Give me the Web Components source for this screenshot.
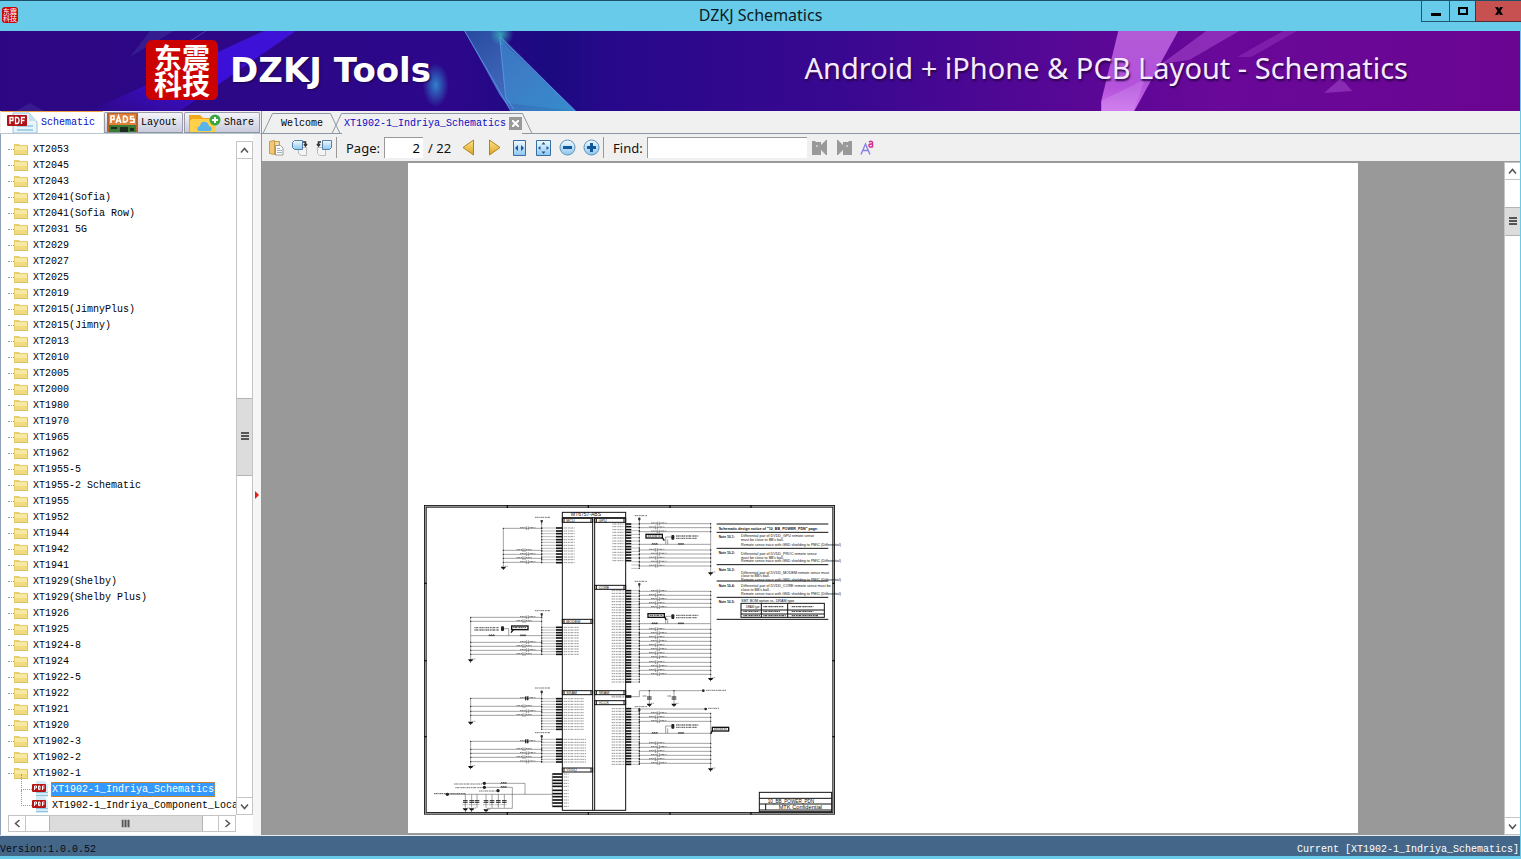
<!DOCTYPE html>
<html lang="en">
<head>
<meta charset="utf-8">
<title>DZKJ Schematics</title>
<style>
html,body{margin:0;height:100%;background:#69cbea}
body{overflow:hidden}
</style>
</head>
<body>
<app-window></app-window>

<script>
const define = (name, html, setup) => {
  const tpl = document.createElement('template');
  tpl.innerHTML = `<style>:host,*{box-sizing:border-box}:host([hidden]){display:none}</style>` + html;
  customElements.define(name, class extends HTMLElement {
    connectedCallback() {
      if (this.shadowRoot) return;
      const root = this.attachShadow({ mode: 'open' });
      root.append(tpl.content.cloneNode(true));
      if (setup) setup(this, root);
    }
  });
};

/* ---------- brand seal ---------- */
define('brand-seal', `
<style>
:host{display:grid;place-content:center;flex:none;
 background:#cc0202;color:#fff;font-family:"Noto Sans CJK SC",sans-serif;font-weight:700;
 width:72px;height:60px;border-radius:6px;font-size:28px;line-height:26px}
span{width:2em;white-space:normal;word-break:break-all}
:host([small]){width:16px;height:16px;border-radius:3px;font-size:7px;line-height:7px;font-weight:400}
</style>
<span>东震科技</span>`);

/* ---------- title bar ---------- */
define('title-bar', `
<style>
:host{display:grid;grid-template-columns:1fr auto 1fr;height:31px;background:#69cbea;border-top:1px solid #1c4f68;color:#0b1c24;
 font:16px/29px "Noto Sans","Open Sans",sans-serif}
brand-seal{margin:6px 2px}
h1{margin:0;font:inherit}
.btns{display:flex;justify-content:flex-end}
button{width:28px;height:21px;padding:0;border:1px solid #20566c;border-top:0;border-right:0;background:#69cbea;display:grid;place-items:center}
button.max{width:26px}
button.close{width:46px;background:#c75050;border-color:#5c2a33}
</style>
<brand-seal small></brand-seal><h1>DZKJ Schematics</h1>
<div class="btns">
<button aria-label="Minimize"><svg width="12" height="12"><path d="M1 8h10v3H1z"/></svg></button>
<button class="max" aria-label="Maximize"><svg width="12" height="12"><path fill-rule="evenodd" d="M1 2h10v8H1zM3 4v4h6V4z"/></svg></button>
<button class="close" aria-label="Close"><svg width="10" height="10"><path d="M1 1h3l1 2 1-2h3L6.500 5 9 9H6L5 7 4 9H1l2.500-4z"/></svg></button>
</div>`);

/* ---------- banner ---------- */
define('brand-banner', `
<style>
:host{display:flex;position:relative;height:80px;align-items:center;padding:0 112px 2px 146px;background:#330890;color:#fff;
 font-family:"Noto Sans","Open Sans",sans-serif;white-space:nowrap;overflow:hidden}
svg{position:absolute;inset:0;width:100%;height:100%}
brand-seal,strong,span{position:relative}
strong{margin-left:12px;font-family:"DejaVu Sans",sans-serif;font-size:34px;line-height:40px;font-weight:700;text-shadow:1px 1px 2px #1a0550}
span{margin-left:auto;font-weight:400;font-size:29px;line-height:36px;padding-bottom:4px;color:#f6eaff;text-shadow:1px 2px 2px #2a0448}
</style>
<svg viewBox="0 0 1521 80" preserveAspectRatio="none" aria-hidden="true">
<defs>
<linearGradient id="bg"><stop offset="0" stop-color="#2d0783"/><stop offset=".3" stop-color="#2c078a"/><stop offset=".36" stop-color="#1b0a80"/><stop offset=".4" stop-color="#27088a"/><stop offset=".55" stop-color="#380890"/><stop offset=".72" stop-color="#5b0796"/><stop offset=".8" stop-color="#690899"/><stop offset="1" stop-color="#6a0592"/></linearGradient>
<linearGradient id="sh" x1="0" y1="0" x2="1" y2="1"><stop offset="0" stop-color="#274aa0"/><stop offset=".5" stop-color="#3f66b8"/><stop offset="1" stop-color="#2f86c4"/></linearGradient>
<linearGradient id="pk" x1="0" y1="0" x2="0" y2="1"><stop offset="0" stop-color="#b25bd6"/><stop offset=".7" stop-color="#b452dc"/><stop offset="1" stop-color="#cf72ee"/></linearGradient>
<linearGradient id="bm" x1="0" y1="1" x2="1" y2="0"><stop offset="0" stop-color="#4812e0" stop-opacity="0"/><stop offset=".5" stop-color="#3a0fd8"/><stop offset="1" stop-color="#3f12d6"/></linearGradient>
<radialGradient id="gl"><stop offset="0" stop-color="#2f82cc"/><stop offset="1" stop-color="#2f82cc" stop-opacity="0"/></radialGradient>
<radialGradient id="tl"><stop offset="0" stop-color="#38b8c0" stop-opacity=".8"/><stop offset="1" stop-color="#38b8c0" stop-opacity="0"/></radialGradient>
</defs>
<path fill="url(#bg)" d="M0 0h1521v80H0z"/>
<path fill="url(#bm)" d="M264 0h32L180 80H90z"/>
<path fill="#3a2a96" opacity=".6" d="M150 0h24l-44 26zM16 80l14-8 14 8z"/>
<path stroke="#5b4fd0" opacity=".7" fill="none" d="M206 0l-60 38"/>
<ellipse cx="436" cy="54" rx="13" ry="22" fill="url(#gl)"/>
<path fill="url(#sh)" d="M465 0h35l4 8 72 72h-64l-12-16z"/>
<path fill="#3d8fd2" opacity=".55" d="M500 8l6 64 70 8z"/>
<path fill="none" stroke="#5a8fe8" d="M465 0l36 62 10 18M500 6l76 74M500 6l6 60 8 12"/>
<circle cx="502" cy="3" r="12" fill="url(#tl)"/>
<path fill="url(#pk)" d="M1119 0h60l-44 80h-33v-10z"/>
<path fill="#d59af0" opacity=".3" d="M1102 70l44-22-12 32h-32z"/>
<path fill="#9b3cc4" opacity=".7" d="M1207 0h33l-50 29-28 4z"/>
<path fill="#8a2db6" opacity=".6" d="M1284 0h14l-46 26h-14z"/>
<path fill="#8a2bb4" d="M1342 47l11 13-28 2z"/>
</svg>
<brand-seal></brand-seal><strong>DZKJ Tools</strong><span>Android + iPhone &amp; PCB Layout - Schematics</span>`);

/* ---------- scroll bar ---------- */
define('scroll-bar', `
<style>
:host{display:flex;flex-direction:column;width:17px;flex:none;background:#fff;border:1px solid #c4c4c4;overflow:hidden}
:host([horizontal]){flex-direction:row;width:auto;height:17px}
button{flex:none;border:0;padding:0;background:#fff;height:16px;width:15px;display:grid;place-items:center;overflow:hidden}
:host([horizontal]) button{width:16px;height:15px}
svg{fill:none;stroke:#555;stroke-width:1.500}
.a{border:0 solid #c4c4c4;flex:var(--before) 1 0;border-top-width:1px}
.b{border:0 solid #c4c4c4;flex:var(--after) 1 0;border-bottom-width:1px}
:host([horizontal]) .a{border-width:0 0 0 1px}
:host([horizontal]) .b{border-width:0 1px 0 0}
.t{flex:none;height:var(--thumb);background:#dcdcdc;border:0 solid #b4b4b4;border-width:1px 0;display:grid;place-items:center}
:host([horizontal]) .t{height:auto;width:var(--thumb);border-width:0 1px}
.g{stroke-width:2}
:host([horizontal]) svg{transform:rotate(-90deg)}
</style>
<button aria-label="Scroll back" tabindex="-1"><svg width="9" height="9"><path d="M1 6.500l3.500-4 3.500 4"/></svg></button>
<div class="a"></div><div class="t"><svg class="g" width="8" height="9"><path d="M0 1h8M0 4h8M0 7h8"/></svg></div><div class="b"></div>
<button aria-label="Scroll on" tabindex="-1"><svg width="9" height="9"><path d="M1 2.500l3.500 4 3.500-4"/></svg></button>`);

/* ---------- side tabs ---------- */
define('side-tab', `
<style>
:host{display:block;align-self:end}
button{display:flex;align-items:center;gap:3px;height:21px;padding:0 5px 0 2px;border:1px solid #9a9aa8;border-bottom-color:#8b97a3;border-radius:2px 2px 0 0;
 background:linear-gradient(#f4f4fa,#c9cbdc);font:inherit;color:#000;overflow:hidden}
:host([active]) button{height:23px;border:0;border-top:2px solid #f0a040;background:#fff;color:#0a0ac0;padding:0 8px 0 6px}
</style>
<button role="tab"><slot name="icon"></slot><slot></slot></button>`);

/* ---------- tree ---------- */
define('tree-item', `
<style>
:host{display:flex;height:16px;align-items:center;white-space:nowrap;line-height:15px}
.d{flex:none;width:6px;border-top:1px dotted #999}
svg{flex:none}
.l{padding:0 1px;margin-left:4px}
.pdf{display:none}
:host([file]) .pdf{display:block}
:host([file]) .fold{display:none}
:host([file]) .d{position:relative;width:11px;margin-left:13px}
:host([file]) .d::before{content:"";position:absolute;left:0;bottom:0;height:16px;border-left:1px dotted #999}
:host([file]) .l{margin-left:3px}
:host([selected]) .l{background:#3399ff;color:#fff;outline:1px dotted #d08a30;outline-offset:-1px}
</style>
<span class="d"></span>
<svg class="fold" width="14" height="12" viewBox="0 0 14 12"><path fill="#e5cf6c" d="M0 1h5l1 1h8v10H0z"/><path fill="#f8e9a0" d="M1 3h12v8H1z"/><path fill="#f0db80" d="M1 7h12v4H1z"/><path fill="none" stroke="#d8c25e" d="M.5 11.500h13v-9"/></svg>
<svg class="pdf" width="16" height="16" viewBox="0 0 16 16"><path fill="#d4ebf6" d="M4 0h9l3 4v12H4z"/><path fill="#8fc4df" d="M4 11h12v1H4zM4 14h12v1H4z"/><rect y="3" width="14" height="8" rx="1" fill="#b81414"/><path fill="none" stroke="#fff" d="M2.500 9V5h2v2h-2M6.500 5v3.500h1.500V5zM10.500 9V5h2M10.500 7h2"/></svg>
<span class="l"><slot></slot></span>`);

define('tree-view', `
<style>:host{display:block;overflow:hidden;min-height:0;min-width:0}</style>
<div role="tree" aria-label="Schematics"></div>`, (host, root) => {
  const list = root.querySelector('div');
  const folders = ['XT2053','XT2045','XT2043','XT2041(Sofia)','XT2041(Sofia Row)','XT2031 5G','XT2029','XT2027','XT2025','XT2019','XT2015(JimnyPlus)','XT2015(Jimny)','XT2013','XT2010','XT2005','XT2000','XT1980','XT1970','XT1965','XT1962','XT1955-5','XT1955-2 Schematic','XT1955','XT1952','XT1944','XT1942','XT1941','XT1929(Shelby)','XT1929(Shelby Plus)','XT1926','XT1925','XT1924-8','XT1924','XT1922-5','XT1922','XT1921','XT1920','XT1902-3','XT1902-2','XT1902-1'];
  const add = (text, ...flags) => {
    const item = document.createElement('tree-item');
    item.setAttribute('role', 'treeitem');
    item.textContent = text;
    flags.forEach(f => item.setAttribute(f, ''));
    list.append(item);
  };
  folders.forEach(f => add(f));
  add('XT1902-1_Indriya_Schematics', 'file', 'selected');
  add('XT1902-1_Indriya_Component_Loca', 'file');
  add('');
});

define('side-panel', `
<style>
:host{display:flex;flex-direction:column;width:261px;flex:none;min-height:0;background:#f0f0f0}
nav{display:flex;height:23px;gap:1px;padding-left:1px;border-bottom:1px solid #b9c4ce}
.body{flex:1;min-height:0;display:grid;grid-template-columns:1fr 17px 8px;grid-template-rows:1fr 17px;padding:7px 0 3px 7px;background:#fff;border-left:1px solid #8fa0b4}
tree-view{grid-area:1/1}
.v{grid-area:1/2;--before:239;--thumb:78px;--after:322}
.h{grid-area:2/1;--before:25;--thumb:154px;--after:16}
.split{grid-area:1/3/3/4;display:grid;place-items:center;background:#f6f6f8;margin:-7px 0 -3px}
.split svg{margin-top:20px}
</style>
<nav role="tablist">
<side-tab active><svg slot="icon" width="31" height="21" viewBox="0 0 31 21"><path fill="#e8f4fb" stroke="#9ac0d8" d="M6 21V1h16l8 9v11z"/><path fill="#c3e0ef" d="M22 1v8h8z"/><path fill="#a6d0e8" d="M10 13h16v2H10zM10 17h16v2H10z"/><rect y="3" width="20" height="11" rx="1" fill="#b01218"/><path fill="none" stroke="#fff" stroke-width="1.300" d="M3 12V5.500h3v3H3M8.500 5.500v6h1.500q2 0 2-3t-2-3zM14.500 12V5.500H18M14.500 8.500h3"/></svg>Schematic</side-tab>
<side-tab><svg slot="icon" width="31" height="19" viewBox="0 0 31 19"><path fill="#b8622a" d="M0 0h31v19H0z"/><path fill="#e0803a" d="M2 1h27v11H2z"/><path fill="#3a7a34" d="M2 12h27v7H2z"/><path fill="#1c2c1c" d="M13 14h8v5h-8zM4 14h6v2H4zM23 15h4v3h-4z"/><path fill="none" stroke="#fff" stroke-width="1.600" d="M4 10V3h3v3.500H4M9 10l2.500-7 2.500 7M10 8h3M16.500 3v6.200q4 0 4-3t-4-3.200M27 3.500h-3.500v2.500H27v3.200h-4"/></svg>Layout</side-tab>
<side-tab><svg slot="icon" width="34" height="19" viewBox="-2 0 34 19"><path fill="#f0a818" d="M0 2h11l3 3h13v14H0z"/><path fill="#ffd04a" d="M1 8q2-3 6-2h20v13H1z"/><path fill="#58b4ec" d="M9 18q-2-4 2-5 1-5 5-4 3 0 4 4 4 1 2 5z"/><circle cx="26" cy="7" r="5.500" fill="#3aa840"/><path stroke="#fff" stroke-width="2" d="M26 4v6M23 7h6"/></svg>Share</side-tab>
</nav>
<div class="body"><tree-view></tree-view><scroll-bar class="v"></scroll-bar><scroll-bar class="h" horizontal></scroll-bar>
<div class="split"><svg width="6" height="8"><path fill="#e02010" d="M1 0l4 4-4 4z"/></svg></div></div>`);

/* ---------- document tabs ---------- */
define('doc-tab', `
<style>
:host{display:flex;height:21px;margin-left:-8px}
svg.e{flex:none;fill:#f0f0f0;stroke:#8b97a3;display:block}
.m{display:flex;align-items:center;border-top:1px solid #8b97a3;border-bottom:1px solid #8b97a3;background:#f0f0f0;gap:3px;padding:0 7px 0 8px}
button{border:0;background:none;padding:0;font:inherit;color:#000;line-height:18px}
:host([active]){position:relative}
:host([active]) .m{border-bottom-color:#f0f0f0;padding:0 0 0 2px}
:host([active]) button{color:#0a0ac0}
.x{display:none}
:host([active]) button.x{display:grid;place-items:center;width:13px;height:13px;background:#999}
</style>
<svg class="e" width="10" height="21"><path d="M0 20.500L9.500.5H10"/></svg>
<div class="m"><button role="tab"><slot></slot></button><button class="x" aria-label="Close tab"><svg width="7" height="7"><path stroke="#fff" stroke-width="2" d="M0 0l7 7M7 0L0 7"/></svg></button></div>
<svg class="e" width="10" height="21"><path d="M0 .5h.5L10 20.500"/></svg>`);

define('doc-tabs', `
<style>
:host{display:flex;align-items:flex-end;height:23px;padding-left:9px;
 background:linear-gradient(#8b97a3,#8b97a3) bottom/100% 1px no-repeat #f0f0f0}
</style>
<doc-tab>Welcome</doc-tab><doc-tab active>XT1902-1_Indriya_Schematics</doc-tab>`);

/* ---------- toolbar ---------- */
define('pdf-toolbar', `
<style>
:host{display:flex;align-items:center;height:28px;padding-left:6px;background:#f0f0f0;border-bottom:1px solid #999;color:#111;
 font:13px/20px "Noto Sans","Open Sans",sans-serif;white-space:nowrap}
button{border:0;background:none;padding:0;width:24px;height:24px;flex:none;display:grid;place-items:center}
button.s{width:16px}
button.w{width:32px}
button.nav{width:26px}
i{flex:none;width:1px;height:21px;background:#999}
.s + i{margin-left:4px}
label{margin:0 4px 0 9px}
input{height:21px;border:1px solid #999;border-right:0;border-bottom:0;background:#fff;font:inherit;padding:0 3px;outline:0}
.pg{width:39px;text-align:right}
.fd{width:160px;margin-right:1px}
.n{margin:0 4px 0 5px}
.defs{position:absolute}
</style>
<svg class="defs" width="0" height="0"><defs><linearGradient id="g" x2="0" y2="1"><stop stop-color="#ffe48a"/><stop offset="1" stop-color="#dca520"/></linearGradient><linearGradient id="b" x2="0" y2="1"><stop stop-color="#f2faff"/><stop offset="1" stop-color="#8cc6f0"/></linearGradient></defs></svg>
<button class="s" aria-label="Copy"><svg width="15" height="16" viewBox="0 0 15 16"><path fill="#f2c878" stroke="#c89a4c" d="M.5 1.500l5-1v14l-5-1z"/><path fill="#f5d898" stroke="#c89a4c" d="M5.500 1.500h5v13h-5z"/><path fill="#fff" stroke="#999" d="M6.500 5.500h5l2.500 2.500v7H6.500z"/><path stroke="#9ab4cc" d="M8 8.500h3M8 10.500h5M8 12.500h5"/></svg></button>
<button class="w" aria-label="Rotate right"><svg width="16" height="16" viewBox="0 0 16 16"><path fill="#f4f4f4" stroke="#bbb" d="M6.500 7.500h8v8h-5l-3-2z"/><path fill="url(#b)" stroke="#5580aa" d="M2.500.5h8v9h-8l-2-2v-5z"/><path fill="none" stroke="#333" stroke-width="1.500" d="M11 2h2.500v3M12 4l1.500 2L15 4"/></svg></button>
<button class="s" aria-label="Rotate left"><svg width="16" height="16" viewBox="0 0 16 16"><path fill="#f4f4f4" stroke="#bbb" d="M1.500 7.500h8v8h-6l-2-2z"/><path fill="url(#b)" stroke="#5580aa" d="M6.500.5h9v7l-2 2h-7z"/><path fill="none" stroke="#333" stroke-width="1.500" d="M5 2H2.500v3M1 4l1.500 2L4 4"/></svg></button>
<i></i>
<label for="p">Page:</label><input id="p" class="pg" value="2"><span class="n">/ 22</span>
<button class="nav" aria-label="Previous page"><svg width="13" height="17"><path fill="url(#g)" stroke="#b08420" d="M11.500 1v15L1 8.500z"/></svg></button>
<button class="nav" aria-label="Next page"><svg width="13" height="17"><path fill="url(#g)" stroke="#b08420" d="M1.500 1v15L12 8.500z"/></svg></button>
<button aria-label="Fit width"><svg width="13" height="16"><path fill="url(#b)" stroke="#3a6ca8" d="M.5.5h12v15H.5z"/><path fill="#1b56a0" d="M2 8l3-3v6zM11 8L8 5v6z"/></svg></button>
<button aria-label="Fit page"><svg width="15" height="16"><path fill="url(#b)" stroke="#3a6ca8" d="M.5.5h14v15H.5z"/><path fill="#1b56a0" d="M7.500 2l2 2.500h-4zM7.500 14l2-2.500h-4zM2 8l2.500-2v4zM13 8l-2.500-2v4z"/></svg></button>
<button aria-label="Zoom out"><svg width="17" height="17"><circle cx="8.500" cy="8.500" r="7.500" fill="url(#b)" stroke="#5a92b8"/><path fill="#14589c" d="M4 7h9v3H4z"/></svg></button>
<button aria-label="Zoom in"><svg width="17" height="17"><circle cx="8.500" cy="8.500" r="7.500" fill="url(#b)" stroke="#5a92b8"/><path fill="#14589c" d="M4 7h3V4h3v3h3v3h-3v3H7v-3H4z"/></svg></button>
<i></i>
<label for="f">Find:</label><input id="f" class="fd">
<button aria-label="Find previous"><svg width="16" height="15"><path fill="#999" d="M0 1h3l1 1h5v3l5-5h1v15h-1l-5-5v5H0z"/><path fill="#c8c8c8" d="M4 5h2v2H4z"/></svg></button>
<button aria-label="Find next"><svg width="16" height="15"><path fill="#999" d="M1 0h1l5 5V2h5l1-1h3v14H7v-5l-5 5H1z"/><path fill="#c8c8c8" d="M10 5h2v2h-2z"/></svg></button>
<button aria-label="Match case"><svg width="15" height="15"><path fill="none" stroke="#8a80e8" stroke-width="1.400" d="M1 14.500L5.500 4 10 14.500M3 10.500h5"/><path fill="none" stroke="#d02c90" stroke-width="1.500" d="M9 2q3-1.500 3.500.5V7.500M12.500 4q-4-.5-3.500 2 1 2 3.500.5"/></svg></button>`);

/* ---------- schematic sheet: drawn on a grid of thirds of a pixel ---------- */
define('schematic-sheet', `
<style>
:host{display:block}
svg{display:block}
text{font-family:"Liberation Sans",sans-serif;fill:#111}
</style>
<svg width="425" height="316" viewBox="0 0 1275 948"></svg>`, (host, root) => {
  let o = '';
  const line = (x1, y1, x2, y2, w = 1.5, c = '#444') => o += `<path d="M${x1} ${y1}L${x2} ${y2}" stroke="${c}" stroke-width="${w}"/>`;
  const box = (x, y, w, h, s = 3, f = 'none') => o += `<rect x="${x}" y="${y}" width="${w}" height="${h}" fill="${f}" stroke="#111" stroke-width="${s}"/>`;
  const text = (x, y, t, size = 10, extra = '') => o += `<text x="${x}" y="${y}" font-size="${size}" ${extra}>${t}</text>`;
  const dash = (x1, y, x2, w = 3, c = '#777') => o += `<path d="M${x1} ${y}H${x2}" stroke="${c}" stroke-width="${w}" stroke-dasharray="4 1 6 2 3 1"/>`;
  const dot = (x, y, r = 2) => o += `<circle cx="${x}" cy="${y}" r="${r}" fill="#222"/>`;
  const gnd = (x, y) => { o += `<path d="M${x - 8} ${y - 3}h16l-4 6h-3v4h-2v-4h-3z" fill="#111"/>`; dash(x + 5, y - 4, x + 14, 2); };
  const each = (y1, y2, n, fn) => { for (let i = 0; i < n; i++) fn(Math.round(y1 + (y2 - y1) * i / (n - 1))); };
  const pins = (x1, x2, y1, y2, n, names) => each(y1, y2, n, y => { line(x1, y, x2, y, 5, '#111'); dash(names[0], y, names[1], 3, '#999'); });
  const fan = (x1, x2, dotX, y1, y2, n) => each(y1, y2, n, y => { line(x1, y, x2, y, 1.5, '#777'); dot(dotX, y); });
  const cap = (x, y) => { dash(x - 22, y - 2, x - 4, 3); line(x - 3, y - 6, x - 3, y + 5); line(x + 3, y - 6, x + 3, y + 5); dash(x + 6, y - 2, x + 24, 3); };
  const port = (x, y) => { o += `<path d="M${x - 3} ${y}h6v5l-3 4-3-4z" fill="#111"/>`; line(x, y, x, y + 14); };
  const coil = (x, y) => o += `<path d="M${x - 9} ${y}q3-7 6 0q3-7 6 0q3-7 6 0z" fill="#333" stroke="#333"/>`;
  const flag = (x, y) => { box(x, y, 49, 11, 4, '#fff'); dash(x + 5, y + 5, x + 44, 3, '#444'); };
  const chip = (x, y) => { o += `<rect x="${x}" y="${y}" width="9" height="14" rx="3" fill="#222"/>`; };

  /* frame */
  box(16, 19, 1225, 921, 8, '#fff');
  o += '<rect x="16" y="19" width="1225" height="921" fill="none" stroke="#aaa" stroke-width="3"/>';
  [262, 505, 750, 993].forEach(x => { line(x, 15, x, 24, 4, '#111'); line(x, 936, x, 944, 4, '#111'); });
  [250, 482, 710].forEach(y => { line(12, y, 20, y, 4, '#111'); line(1237, y, 1245, y, 4, '#111'); });

  /* processor body */
  box(427, 37, 190, 894);
  line(427, 53, 617, 53, 3, '#111');
  line(518, 53, 518, 931, 3, '#111');
  line(524, 53, 524, 931, 3, '#111');
  text(453, 49, 'MT6757-ABS', 15);
  const head = (x, y, w, t) => { box(x, y, w, 12); line(x + 5, y, x + 5, y + 12, 3, '#111'); line(x + w - 5, y, x + w - 5, y + 12, 3, '#111'); text(x + 12, y + 10, t, 11); };
  head(427, 55, 91, 'MCU'); head(524, 55, 93, 'GPU');
  head(524, 256, 93, 'CORE'); head(427, 358, 91, 'MODEM');
  head(427, 572, 91, 'SRAM'); head(524, 572, 93, 'SRAM');
  head(524, 602, 93, 'VCCK'); head(427, 804, 91, 'VDDQ');

  pins(408, 427, 84, 188, 13, [431, 464]);
  pins(408, 427, 382, 463, 11, [431, 476]);
  pins(408, 427, 596, 688, 12, [431, 491]);
  pins(408, 427, 718, 786, 9, [431, 498]);
  pins(397, 427, 822, 859, 5, [431, 446]);
  pins(397, 427, 871, 919, 6, [431, 446]);
  pins(617, 634, 72, 182, 14, [577, 613]);
  pins(617, 634, 272, 546, 34, [575, 613]);
  pins(617, 634, 588, 591, 2, [575, 613]);
  pins(617, 634, 626, 793, 21, [575, 613]);

  /* left-hand nets */
  const left = (x, top, bottom, bus, busEnd, wires, n, pinTop) => {
    line(x, top, x, bottom); gnd(x, bottom + 3);
    dash(345, bus - 8, 392, 3); port(365, bus); line(365, bus, 365, busEnd);
    wires.forEach((y, i) => { line(x, y, 365, y); dot(x, y); dot(365, y); cap(i % 2 ? 312 : 322, y); });
    fan(365, 408, 365, pinTop, busEnd, n);
  };
  left(250, 85, 200, 60, 188, [85, 151, 163, 175, 187], 13, 84);
  left(152, 352, 478, 340, 463, [352, 364, 427, 439, 451, 463], 11, 382);
  line(152, 407, 365, 407); coil(215, 407); coil(309, 407);
  flag(275, 378); chip(243, 379); dash(163, 383, 237, 4); dash(163, 390, 237, 4); line(252, 386, 266, 386); line(266, 386, 266, 407); line(273, 398, 281, 388, 4, '#111');
  left(152, 595, 665, 572, 688, [595, 619, 634, 646], 12, 596);
  left(152, 724, 798, 706, 786, [724, 748, 760, 772, 785], 9, 718);
  [595, 724].forEach(y => { line(317, y - 6, 317, y + 6, 3, '#111'); line(323, y - 6, 323, y + 6, 3, '#111'); });

  /* supply filter */
  line(80, 883, 397, 883); line(190, 850, 315, 850); line(315, 850, 315, 883);
  line(190, 862, 277, 862); line(277, 862, 277, 925); line(200, 925, 277, 925); line(397, 822, 397, 919);
  dash(102, 852, 186, 3, '#777'); dash(106, 863, 186, 3, '#777'); dash(177, 873, 230, 3, '#777'); dash(42, 881, 136, 3, '#555');
  dot(193, 850, 5); dot(193, 862, 5); dot(234, 872, 5); dot(82, 883, 5); coil(251, 850); coil(251, 862);
  [136, 155, 171, 198, 216, 235, 253].forEach(x => { line(x, 883, x, 923); line(x - 7, 902, x + 7, 902, 3, '#222'); line(x - 7, 907, x + 7, 907, 3, '#222'); dash(x - 9, 914, x + 8, 2); });
  gnd(136, 928); gnd(155, 928); gnd(198, 931);

  /* right-hand nets */
  const right = (bus, top, bottom, gy, wires, n, y1, y2) => {
    dash(644, bus - 6, 681, 3); port(658, bus); line(658, bus, 658, y2);
    line(872, top, 872, gy); gnd(872, gy + 2);
    wires.forEach((y, i) => { line(658, y, 872, y); dot(658, y); dot(872, y); cap(i % 2 ? 709 : 715, y); });
    fan(634, 658, 658, y1, y2, n);
  };
  const feed = (y, fx, fy) => {
    line(658, y, 872, y); coil(704, y); coil(783, y); line(737, y, 737, y - 22); line(737, y - 22, 755, y - 22); line(743, y, 743, y - 15);
    chip(754, y - 28); dash(768, y - 25, 835, 4); dash(768, y - 18, 830, 4); flag(fx, fy);
  };
  right(53, 71, 205, 218, [71, 83, 95, 150, 162, 174, 186, 198], 14, 72, 205);
  feed(133, 678, 103); line(727, 113, 733, 122, 4, '#111');
  right(250, 274, 535, 535, [274, 286, 298, 310, 322, 388, 400, 412, 424, 436, 448, 460, 472, 487, 499, 511, 523], 34, 272, 546);
  feed(371, 684, 341); line(733, 350, 739, 360, 4, '#111');
  line(634, 590, 658, 590); line(658, 590, 658, 572); line(658, 572, 850, 572); dot(850, 572, 4); dash(858, 571, 918, 3);
  [688, 762].forEach(x => { dot(x, 572); line(x, 572, x, 612); line(x - 7, 591, x + 7, 591, 3, '#111'); line(x - 7, 597, x + 7, 597, 3, '#111'); gnd(x, 614); dash(x - 20, 588, x - 8, 3); });
  right(626, 640, 800, 806, [640, 652, 664, 730, 742, 754, 766, 778, 790], 21, 626, 793);
  line(658, 627, 857, 627); dot(857, 627, 4); dash(864, 625, 898, 3);
  feed(700, 877, 682); line(877, 692, 872, 702, 4, '#111');

  /* design notes */
  [72, 97, 145, 194, 243, 292, 358].forEach(y => line(890, y, 1225, y, 3, '#111'));
  text(896, 90, 'Schematic design notice of "10_BB_POWER_PDN" page.', 11, 'font-weight="700"');
  const note = (y, n, rows) => { text(896, y + 4, 'Note 10-' + n + ':', 10, 'font-weight="700"'); rows.forEach(([dy, t]) => text(963, y + dy, t, 11)); };
  note(110, 1, [[0, 'Differential pair of DVDD_GPU remote sense'], [12, 'must be close to BB\'s ball.'], [27, 'Remote sense trace with GND shielding to PMIC (Differential)']]);
  note(159, 2, [[7, 'Differential pair of DVDD_PROC remote sense'], [18, 'must be close to BB\'s ball.'], [28, 'Remote sense trace with GND shielding to PMIC (Differential)']]);
  note(208, 3, [[13, 'Differential pair of DVDD_MODEM remote sense must'], [24, 'close to BB\'s ball.'], [35, 'Remote sense trace with GND shielding to PMIC (Differential)']]);
  note(257, 4, [[4, 'Differential pair of DVDD_CORE remote sense must be'], [15, 'close to BB\'s ball.'], [28, 'Remote sense trace with GND shielding to PMIC (Differential)']]);
  note(305, 5, [[2, 'SMT BOM option vs. DRAM type']]);
  box(963, 310, 250, 42); line(963, 330, 1213, 330, 3, '#111'); line(963, 342, 1213, 342, 3, '#111');
  line(1024, 310, 1024, 352, 3, '#111'); line(1103, 310, 1103, 352, 3, '#111');
  text(978, 324, 'DRAM type', 8);
  [[1030, 320, 1090], [1115, 320, 1180], [970, 334, 1018], [1030, 334, 1080], [1115, 334, 1180], [970, 347, 1020], [1030, 347, 1098], [1115, 347, 1195]].forEach(a => dash(a[0], a[1], a[2], 4, '#555'));

  /* title block */
  box(1018, 877, 217, 58); line(1018, 895, 1235, 895, 3, '#111'); line(1018, 912, 1235, 912, 3, '#111'); line(1018, 930, 1235, 930, 3, '#111'); line(1037, 912, 1037, 930, 3, '#111');
  text(1043, 910, '10_BB_POWER_PDN', 14); text(1076, 928, 'MTK Confidential', 17);
  root.querySelector('svg').innerHTML = o;
});

/* ---------- page viewer ---------- */
define('page-viewer', `
<style>
:host{display:flex;flex:1;min-height:0;background:#999}
.area{flex:1;min-width:0;overflow:hidden;display:flex;justify-content:center;padding:1px 0 2px}
.page{flex:none;width:950px;background:#fff;padding:337px 0 0 12px;overflow:hidden}
scroll-bar{width:16px;--before:27;--thumb:29px;--after:583;border-right:0}
</style>
<div class="area"><div class="page"><schematic-sheet></schematic-sheet></div></div><scroll-bar></scroll-bar>`);

define('doc-panel', `
<style>:host{display:flex;flex-direction:column;flex:1;min-width:0;min-height:0;border-left:1px solid #8b97a3;background:#f0f0f0}</style>
<doc-tabs></doc-tabs><pdf-toolbar></pdf-toolbar><page-viewer></page-viewer>`);

/* ---------- status bar ---------- */
define('status-bar', `
<style>:host{display:flex;justify-content:space-between;align-items:flex-end;height:20px;background:#446789;padding:0 1px 0 0;line-height:12px;color:#fff}
.v{color:#0a0a14}</style>
<span class="v">Version:1.0.0.52</span><span>Current [XT1902-1_Indriya_Schematics]</span>`);

define('app-window', `
<style>
:host{display:flex;flex-direction:column;height:100vh;padding-bottom:3px;background:#69cbea;font:10px/16px "Liberation Mono",monospace;color:#000}
.in{display:flex;flex-direction:column;flex:1;min-height:0;margin-right:1px}
main{flex:1;min-height:0;display:flex;border-bottom:1px solid #e4ecf2}
</style>
<title-bar></title-bar>
<div class="in"><brand-banner></brand-banner><main><side-panel></side-panel><doc-panel></doc-panel></main><status-bar></status-bar></div>`);
</script>
</body>
</html>
